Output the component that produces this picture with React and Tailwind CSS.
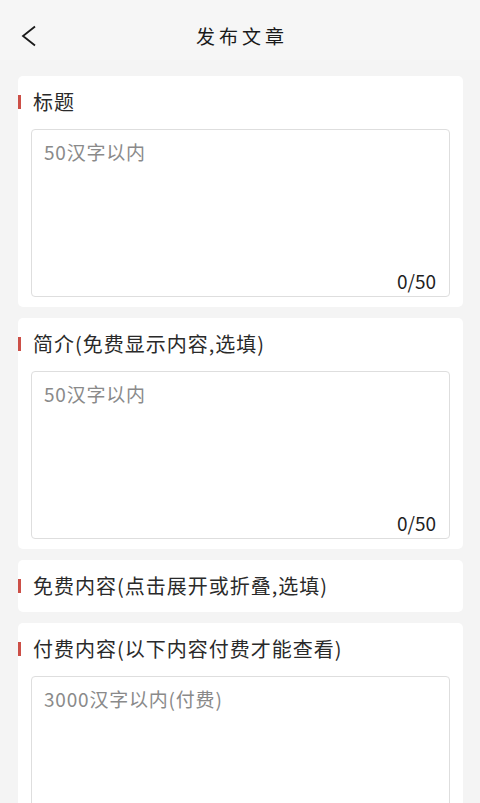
const font = { fontFamily: '"Noto Sans CJK SC", "Noto Sans", sans-serif' };

function Label({ children }) {
  return (
    <div className="flex items-center h-6">
      <span className="w-[3px] h-[14px] bg-[#cc4f47]"></span>
      <span className="ml-3 text-[20px] leading-6 tracking-[1px] text-[#2a2a2a]">{children}</span>
    </div>
  );
}

function Field({ placeholder, count, height }) {
  return (
    <div
      className={`mx-[13px] mt-[15px] border border-[#dedede] rounded-[4px] bg-white flex flex-col justify-between pl-[12px] pr-[13px] pt-[10px] pb-[3px] ${height}`}
    >
      <span className="text-[19px] leading-6 tracking-[0.8px] text-[#8a8a8a]">{placeholder}</span>
      {count && <span className="self-end text-[19px] leading-6 text-[#1f1f1f]">{count}</span>}
    </div>
  );
}

export default function App() {
  return (
    <div className="w-[480px] h-[803px] overflow-hidden bg-[#f4f4f4]" style={font}>
      <div className="h-[60px] pt-[12px] bg-[#f6f6f6] flex items-center">
        <svg className="ml-[21px]" width="16" height="22" viewBox="0 0 16 22">
          <polyline points="14,1.5 2,11 14,20.5" fill="none" stroke="#1a1a1a" strokeWidth="1.8" />
        </svg>
        <div className="flex-1 text-center text-[19px] tracking-[4px] text-[#1a1a1a] pr-[33px]">
          发布文章
        </div>
      </div>

      <div className="flex flex-col gap-[11px] pt-[16px] px-[18px] pr-[17px]">
        <div className="bg-white rounded-[5px] pt-[14px] pb-[10px]">
          <Label>标题</Label>
          <Field placeholder="50汉字以内" count="0/50" height="h-[168px]" />
        </div>

        <div className="bg-white rounded-[5px] pt-[14px] pb-[10px]">
          <Label>简介(免费显示内容,选填)</Label>
          <Field placeholder="50汉字以内" count="0/50" height="h-[168px]" />
        </div>

        <div className="bg-white rounded-[5px] py-[14px]">
          <Label>免费内容(点击展开或折叠,选填)</Label>
        </div>

        <div className="bg-white rounded-[5px] pt-[14px] pb-[10px]">
          <Label>付费内容(以下内容付费才能查看)</Label>
          <Field placeholder="3000汉字以内(付费)" height="h-[300px]" />
        </div>
      </div>
    </div>
  );
}
